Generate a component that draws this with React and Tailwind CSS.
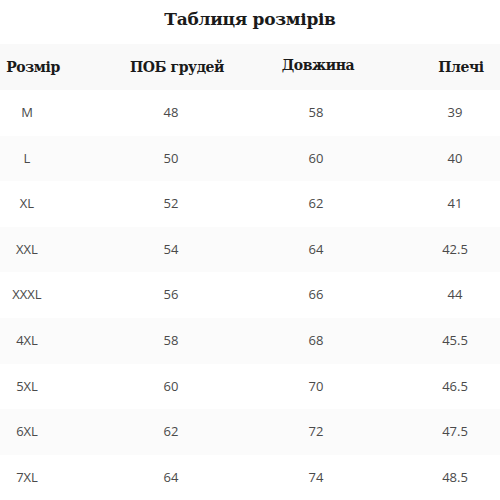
import React from "react";

const rows = [
  ["M", "48", "58", "39"],
  ["L", "50", "60", "40"],
  ["XL", "52", "62", "41"],
  ["XXL", "54", "64", "42.5"],
  ["XXXL", "56", "66", "44"],
  ["4XL", "58", "68", "45.5"],
  ["5XL", "60", "70", "46.5"],
  ["6XL", "62", "72", "47.5"],
  ["7XL", "64", "74", "48.5"],
];

export default function App() {
  return (
    <div className="w-[500px] h-[500px] bg-white overflow-hidden">
      <div className="h-[44px] flex items-center justify-center pb-[4px] font-['DejaVu_Serif',serif] font-bold text-[17px] text-[#1a1a1a] tracking-[-0.3px]">
        Таблиця розмірів
      </div>
      <div className="h-[46px] flex items-center bg-[#f9f9f9] font-['DejaVu_Serif',serif] font-bold text-[14px] text-[#1a1a1a] tracking-[-0.4px]">
        <div className="w-[60px] ml-[3px] flex justify-center whitespace-nowrap">Розмір</div>
        <div className="w-[60px] ml-[84px] flex justify-center whitespace-nowrap">ПОБ грудей</div>
        <div className="w-[60px] ml-[81px] flex justify-center whitespace-nowrap -mt-[3px]">Довжина</div>
        <div className="w-[60px] ml-[83px] flex justify-center whitespace-nowrap">Плечі</div>
      </div>
      {rows.map((r, i) => (
        <div
          key={i}
          className={`h-[45.6px] flex items-center font-['Open_Sans',sans-serif] font-normal text-[13px] text-[#4a4a4a] ${i % 2 === 1 ? "bg-[#fbfbfb]" : "bg-white"}`}
        >
          <div className="w-[54px] flex justify-center">{r[0]}</div>
          <div className="w-[60px] ml-[87px] flex justify-center">{r[1]}</div>
          <div className="w-[60px] ml-[85px] flex justify-center">{r[2]}</div>
          <div className="w-[60px] ml-[79px] flex justify-center">{r[3]}</div>
        </div>
      ))}
    </div>
  );
}
